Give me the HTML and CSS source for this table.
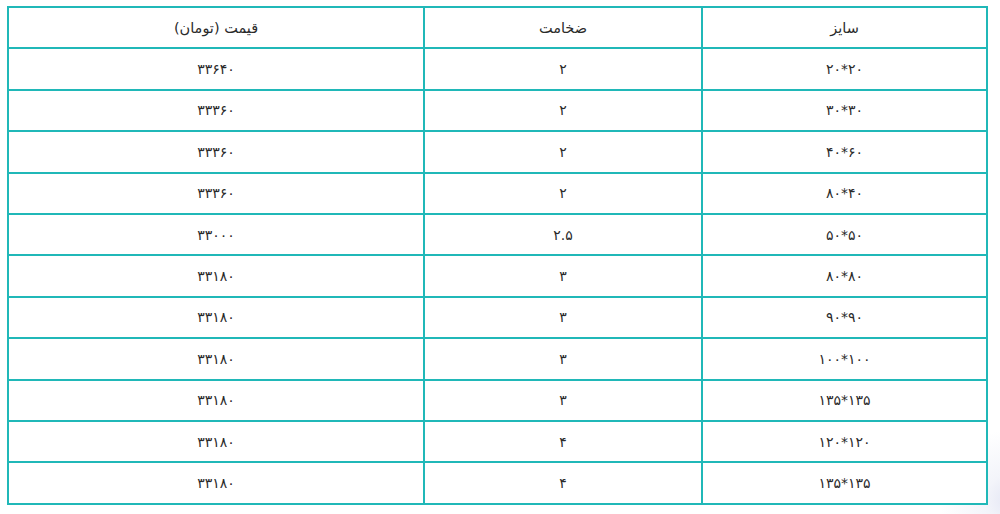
FILE: index.html
```html
<!DOCTYPE html>
<html lang="fa" dir="rtl">
<head>
<meta charset="utf-8">
<link rel="stylesheet" href="styles.css">
</head>
<body>
<table class="price-table">
  <thead>
    <tr><th class="c-size">سایز</th><th class="c-thick">ضخامت</th><th class="c-price">قیمت (تومان)</th></tr>
  </thead>
  <tbody>
    <tr><td>۲۰*۲۰</td><td>۲</td><td>۳۳۶۴۰</td></tr>
    <tr><td>۳۰*۳۰</td><td>۲</td><td>۳۳۳۶۰</td></tr>
    <tr><td>۶۰*۴۰</td><td>۲</td><td>۳۳۳۶۰</td></tr>
    <tr><td>۴۰*۸۰</td><td>۲</td><td>۳۳۳۶۰</td></tr>
    <tr><td>۵۰*۵۰</td><td>۲.۵</td><td>۳۳۰۰۰</td></tr>
    <tr><td>۸۰*۸۰</td><td>۳</td><td>۳۳۱۸۰</td></tr>
    <tr><td>۹۰*۹۰</td><td>۳</td><td>۳۳۱۸۰</td></tr>
    <tr><td>۱۰۰*۱۰۰</td><td>۳</td><td>۳۳۱۸۰</td></tr>
    <tr><td>۱۳۵*۱۳۵</td><td>۳</td><td>۳۳۱۸۰</td></tr>
    <tr><td>۱۲۰*۱۲۰</td><td>۴</td><td>۳۳۱۸۰</td></tr>
    <tr><td>۱۳۵*۱۳۵</td><td>۴</td><td>۳۳۱۸۰</td></tr>
  </tbody>
</table>
</body>
</html>
```
FILE: styles.css
```css
html, body {
  margin: 0;
  height: 100%;
}
body {
  background: radial-gradient(circle at 1010px 500px, #e4e6f4 0, #f3f4fa 25px, #ffffff 70px), #ffffff;
  font-family: "DejaVu Sans", "Noto Sans", sans-serif;
  color: #2a2a2a;
}
.price-table {
  border-collapse: collapse;
  margin: 6px 12px 0 0;
  width: 981px;
  table-layout: fixed;
  background: #ffffff;
}
.price-table th,
.price-table td {
  border: 2px solid #20b8b8;
  height: 39.4px;
  padding: 0;
  text-align: center;
  vertical-align: middle;
  font-size: 14px;
  font-weight: normal;
}
.price-table th {
  font-size: 14.5px;
}
.c-size { width: 283px; }
.c-thick { width: 276px; }
.c-price { width: auto; }
```
